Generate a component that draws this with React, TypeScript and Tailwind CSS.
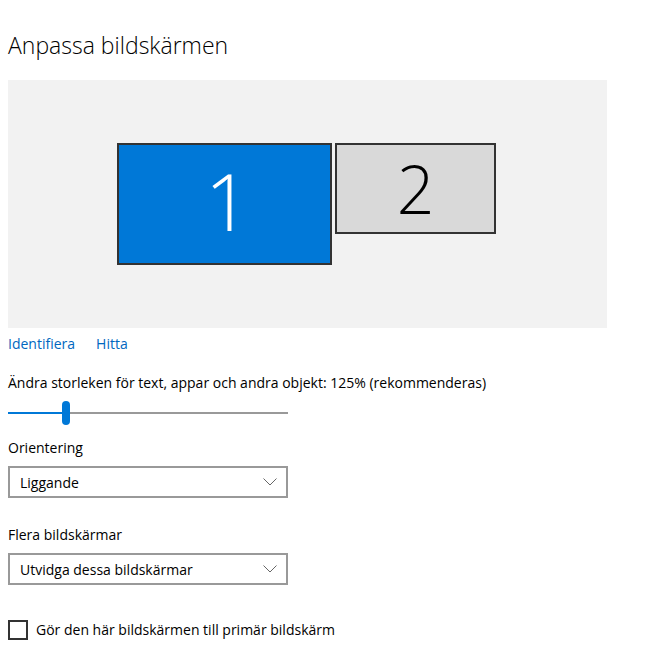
import { useState } from "react";

function Chevron() {
  return (
    <svg width="14" height="8" viewBox="0 0 14 8" fill="none" className="text-[#666]">
      <path d="M0.5 0.5 L7 7 L13.5 0.5" stroke="currentColor" strokeWidth="1" />
    </svg>
  );
}

function Dropdown({ value }: { value: string }) {
  return (
    <div className="flex h-[32px] w-[280px] items-center justify-between border-2 border-[#999] bg-white pl-[10px] pr-[9px] text-[14px] text-black">
      <span>{value}</span>
      <Chevron />
    </div>
  );
}

export default function App() {
  const [primary, setPrimary] = useState(false);

  return (
    <div
      className="min-h-screen bg-white px-2 pt-[30px] text-black"
      style={{ fontFamily: '"Open Sans", "Noto Sans", sans-serif' }}
    >
      <h1 className="text-[23px] leading-[30px] font-light">Anpassa bildskärmen</h1>

      {/* Monitor arrangement */}
      <div className="mt-[20px] flex h-[248px] w-[599px] items-start gap-[3px] bg-[#f2f2f2] pl-[109px] pt-[63px]">
        <div className="flex h-[122px] w-[215px] items-center justify-center border-2 border-[#333] bg-[#0078d7] pb-[8px] pl-[6px]">
          <span className="text-[80px] font-light leading-none text-white">1</span>
        </div>
        <div className="flex h-[91px] w-[161px] items-center justify-center border-2 border-[#333] bg-[#d9d9d9] pb-[2px]">
          <span className="text-[66px] font-light leading-none text-black">2</span>
        </div>
      </div>

      <div className="mt-[6px] flex gap-[21px] text-[14px] leading-[20px] text-[#0067c0]">
        <span>Identifiera</span>
        <span>Hitta</span>
      </div>

      <div className="mt-[19px] text-[14px] leading-[20px]">
        Ändra storleken för text, appar och andra objekt: 125% (rekommenderas)
      </div>

      {/* Slider */}
      <div className="relative mt-[8px] h-[24px] w-[280px]">
        <div className="absolute left-0 top-[11px] h-[2px] w-full bg-[#999]" />
        <div className="absolute left-0 top-[11px] h-[2px] w-[56px] bg-[#0078d7]" />
        <div className="absolute left-[54px] top-0 h-[24px] w-[8px] rounded-full bg-[#0078d7]" />
      </div>

      <div className="mt-[13px] text-[14px] leading-[20px]">Orientering</div>
      <div className="mt-[8px]">
        <Dropdown value="Liggande" />
      </div>

      <div className="mt-[27px] text-[14px] leading-[20px]">Flera bildskärmar</div>
      <div className="mt-[8px]">
        <Dropdown value="Utvidga dessa bildskärmar" />
      </div>

      <label className="mt-[35px] flex items-center gap-[8px] text-[14px] leading-[20px]">
        <button
          onClick={() => setPrimary(!primary)}
          className="h-[20px] w-[20px] border-2 border-[#333] bg-white"
        />
        <span>Gör den här bildskärmen till primär bildskärm</span>
      </label>
    </div>
  );
}
